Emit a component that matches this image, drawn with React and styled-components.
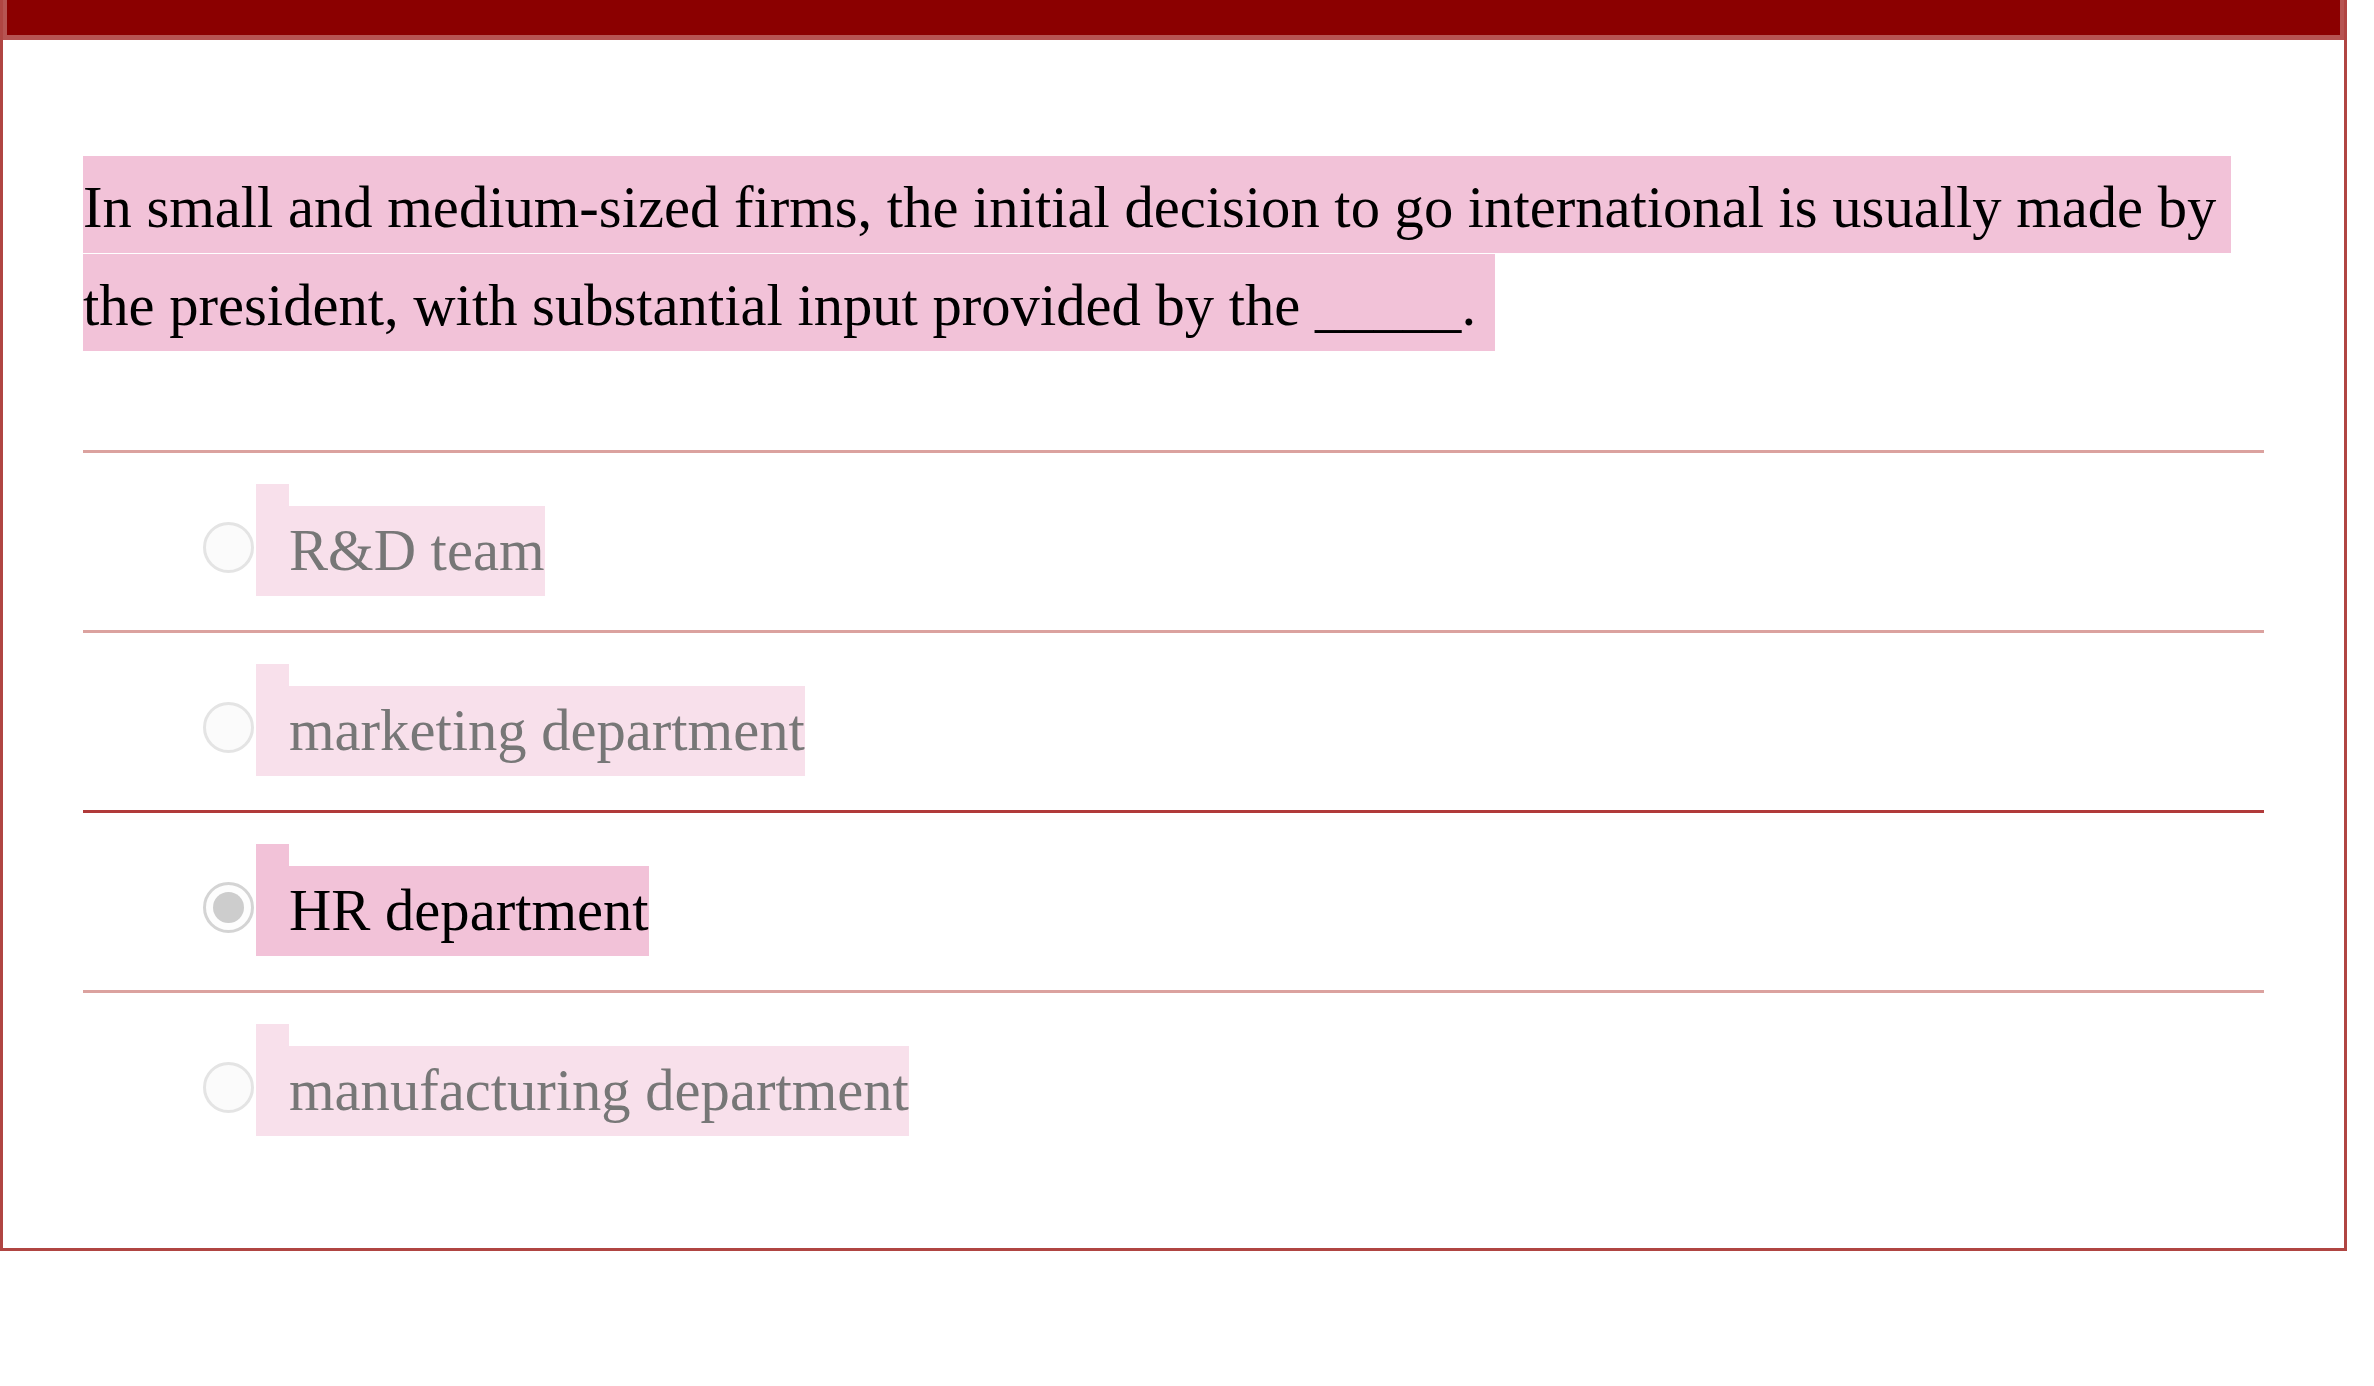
import React from "react";
import styled, { createGlobalStyle } from "styled-components";

const GlobalStyle = createGlobalStyle`
  html, body {
    margin: 0;
    padding: 0;
    background: #ffffff;
  }
  body {
    font-family: "Liberation Serif", "Times New Roman", serif;
  }
`;

const Card = styled.div`
  width: 2341px;
  border: 3px solid #b04542;
  border-top: none;
  background: #ffffff;
`;

const Header = styled.div`
  height: 35px;
  background: #8b0000;
  border: 4px solid #b65452;
  border-top: none;
  border-bottom-width: 5px;
`;

const Body = styled.div`
  padding: 119px 80px 78px 80px;
`;

const Question = styled.div`
  font-size: 58.6px;
  line-height: 97.5px;
  color: #000000;
  margin-bottom: 96px;
`;

const Highlight = styled.span`
  background: #f2c2d8;
  padding: 19px 4px 13px 0;
`;

const Options = styled.div`
  display: flex;
  flex-direction: column;
`;

const Row = styled.div`
  display: flex;
  align-items: center;
  border-top: 3px solid ${(p) => (p.$selected ? "#b03a3a" : "#dba29f")};
  padding: 31px 0 34px 120px;
`;

const Radio = styled.span`
  box-sizing: border-box;
  width: 51px;
  height: 51px;
  margin-top: 14px;
  margin-right: 2px;
  border-radius: 50%;
  border: 3px solid ${(p) => (p.$checked ? "#d4d4d4" : "#e4e4e4")};
  background: ${(p) => (p.$checked ? "#fdfdfd" : "#fbfbfb")};
  display: flex;
  align-items: center;
  justify-content: center;
  flex-shrink: 0;

  &::after {
    content: "";
    width: 31px;
    height: 31px;
    border-radius: 50%;
    background: ${(p) => (p.$checked ? "#cdcdcd" : "transparent")};
  }
`;

const Label = styled.label`
  display: flex;
  align-items: flex-end;
`;

const Tab = styled.span`
  width: 33px;
  height: 112px;
  background: ${(p) => (p.$checked ? "#f2c2d8" : "#f8e0eb")};
`;

const OptionText = styled.span`
  display: block;
  font-size: 58.6px;
  line-height: 90px;
  white-space: nowrap;
  color: ${(p) => (p.$checked ? "#000000" : "#777777")};
  background: ${(p) => (p.$checked ? "#f2c2d8" : "#f8e0eb")};
`;

const options = [
  { text: "R&D team" },
  { text: "marketing department" },
  { text: "HR department", checked: true },
  { text: "manufacturing department" },
];

export default function App() {
  return (
    <>
      <GlobalStyle />
      <Card>
        <Header />
        <Body>
          <Question>
            <Highlight>
              {"In small and medium-sized firms, the initial decision to go international is usually made by\u00a0 the president, with substantial input provided by the _____.\u00a0"}
            </Highlight>
          </Question>
          <Options>
            {options.map((o) => (
              <Row key={o.text} $selected={o.checked}>
                <Radio $checked={o.checked} />
                <Label>
                  <Tab $checked={o.checked} />
                  <OptionText $checked={o.checked}>{o.text}</OptionText>
                </Label>
              </Row>
            ))}
          </Options>
        </Body>
      </Card>
    </>
  );
}
